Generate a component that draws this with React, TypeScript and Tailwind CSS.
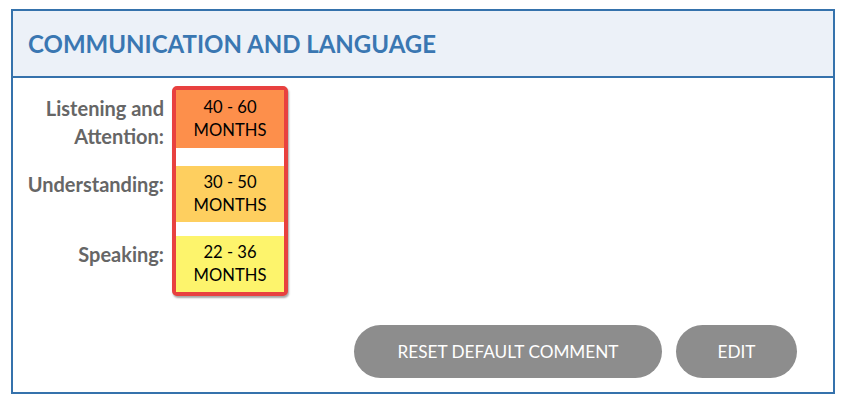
const levels = [
  { label: ["Listening and", "Attention:"], range: "40 - 60", color: "bg-[#fd8f4b]", h: "h-[58px]", gap: "h-[18px]" },
  { label: ["Understanding:"], range: "30 - 50", color: "bg-[#fecf5f]", h: "h-[56px]", gap: "h-[14px]" },
  { label: ["Speaking:"], range: "22 - 36", color: "bg-[#fdf46c]", h: "h-[56px]", gap: "" },
];

function App() {
  return (
    <main className="min-h-screen bg-white pt-[9px] pl-[11px] font-['Lato',sans-serif]">
      <section className="w-[824px] h-[385px] border-2 border-[#3572ac] flex flex-col">
        <header className="h-[67px] shrink-0 bg-[#ecf1f8] border-b-2 border-[#3572ac] flex items-center pl-[15px]">
          <h1 className="text-[24px] font-bold text-[#3a77b2] tracking-normal">
            COMMUNICATION AND LANGUAGE
          </h1>
        </header>

        <div className="flex-1 flex flex-col pt-[8px] pb-[14px] pr-[36px]">
          <div className="flex gap-[8px]">
            <div className="w-[151px] pt-[4px] flex flex-col text-right text-[20px] font-bold leading-[28px] text-[#666666]">
              {levels.map((lv, i) => (
                <div key={i} className={i === 0 ? "h-[76px] pt-[4px]" : i === 1 ? "h-[70px] pt-[4px]" : "h-[56px] pt-[4px]"}>
                  {lv.label.map((line) => (
                    <div key={line}>{line}</div>
                  ))}
                </div>
              ))}
            </div>

            <div className="w-[116px] border-4 border-[#e8413f] rounded-[5px] bg-white shadow-[1px_2px_2px_rgba(0,0,0,0.35)] flex flex-col">
              {levels.map((lv) => (
                <div key={lv.range}>
                  <div className={`${lv.h} ${lv.color} flex flex-col items-center justify-center text-[16.6px] leading-[23px] text-black`}>
                    <span>{lv.range}</span>
                    <span>MONTHS</span>
                  </div>
                  {lv.gap && <div className={lv.gap} />}
                </div>
              ))}
            </div>
          </div>

          <div className="mt-auto flex justify-end gap-[14px]">
            <button className="h-[53px] w-[308px] rounded-full bg-[#8d8d8d] text-white text-[17.2px]">
              RESET DEFAULT COMMENT
            </button>
            <button className="h-[53px] w-[121px] rounded-full bg-[#8d8d8d] text-white text-[17.2px]">
              EDIT
            </button>
          </div>
        </div>
      </section>
    </main>
  );
}

export default App;
